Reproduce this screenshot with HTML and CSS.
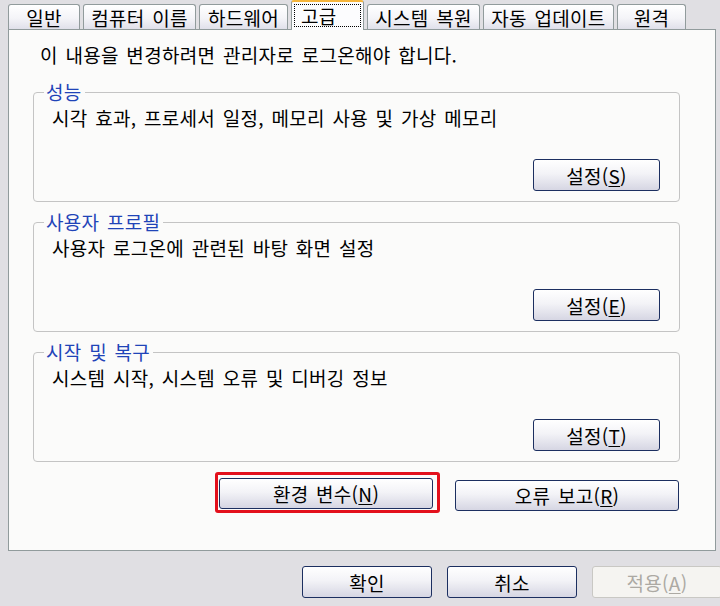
FILE: index.html
```html
<!DOCTYPE html>
<html lang="ko">
<head>
  <meta charset="UTF-8" />
  <title>시스템 등록 정보</title>
  <link rel="stylesheet" href="styles.css">
</head>
<body>

  <div class="tabs">
    <div class="tab tab-general">일반</div>
    <div class="tab tab-computer">컴퓨터 이름</div>
    <div class="tab tab-hardware">하드웨어</div>
    <div class="tab tab-advanced is-active"><span class="focus">고급</span></div>
    <div class="tab tab-restore">시스템 복원</div>
    <div class="tab tab-update">자동 업데이트</div>
    <div class="tab tab-remote">원격</div>
  </div>

  <div class="panel">
    <p class="notice">이 내용을 변경하려면 관리자로 로그온해야 합니다.</p>

    <fieldset class="group">
      <legend>성능</legend>
      <p class="group-desc">시각 효과, 프로세서 일정, 메모리 사용 및 가상 메모리</p>
      <div class="group-actions">
        <button class="btn btn-setting">설정(<u>S</u>)</button>
      </div>
    </fieldset>

    <fieldset class="group">
      <legend>사용자 프로필</legend>
      <p class="group-desc">사용자 로그온에 관련된 바탕 화면 설정</p>
      <div class="group-actions">
        <button class="btn btn-setting">설정(<u>E</u>)</button>
      </div>
    </fieldset>

    <fieldset class="group">
      <legend>시작 및 복구</legend>
      <p class="group-desc">시스템 시작, 시스템 오류 및 디버깅 정보</p>
      <div class="group-actions">
        <button class="btn btn-setting">설정(<u>T</u>)</button>
      </div>
    </fieldset>

    <div class="panel-actions">
      <span class="highlight">
        <button class="btn btn-env">환경 변수(<u>N</u>)</button>
      </span>
      <button class="btn btn-report">오류 보고(<u>R</u>)</button>
    </div>
  </div>

  <div class="dialog-actions">
    <button class="btn btn-dialog">확인</button>
    <button class="btn btn-dialog">취소</button>
    <button class="btn btn-dialog" disabled>적용(<u>A</u>)</button>
  </div>

</body>
</html>
```

FILE: styles.css
```css
* { margin: 0; padding: 0; box-sizing: border-box; }
body {
  width: 720px;
  height: 606px;
  overflow: hidden;
  background: #e0dfe3;
  font-family: "Noto Sans CJK KR", "Noto Sans", sans-serif;
  font-size: 19px;
  letter-spacing: 0.3px;
  word-spacing: 2px;
  color: #000;
}

/* tab strip */
.tabs {
  display: flex;
  align-items: flex-end;
  gap: 3px;
  height: 29px;
  padding-left: 8px;
}
.tab {
  height: 25px;
  border: 1px solid #919b9c;
  border-bottom: none;
  border-radius: 3px 3px 0 0;
  background: linear-gradient(#ffffff, #f4f4f8 55%, #e0e0ea);
  display: flex;
  align-items: center;
  justify-content: center;
  line-height: 1;
}
.tab-general { width: 72px; }
.tab-computer { width: 113px; }
.tab-hardware { width: 89px; }
.tab-advanced { width: 73px; }
.tab-restore { width: 113px; }
.tab-update { width: 131px; }
.tab-remote { width: 69px; }

.tab.is-active {
  height: 30px;
  margin-bottom: -1px;
  position: relative;
  z-index: 1;
  background: #fcfcfe;
  border-top: 2px solid #f5b53c;
  padding: 1px 2px 2px;
}
.focus {
  flex: 1;
  height: 23px;
  border: 1px dotted #000;
  display: flex;
  align-items: center;
  padding-left: 6px;
}

/* tab page */
.panel {
  margin-left: 8px;
  width: 708px;
  height: 522px;
  border: 1px solid #919b9c;
  background: #fbfbfa;
  padding: 15px 35px 0 24px;
}
.notice {
  line-height: 20px;
  padding-left: 7px;
  margin-bottom: 17px;
}

.group {
  border: 1px solid #c4c4c4;
  border-radius: 4px;
  padding: 6px 19px 10px 18px;
  margin-bottom: 10px;
}
.group legend {
  color: #1f44b8;
  line-height: 20px;
  margin-left: -8px;
  padding: 0 3px 0 2px;
}
.group-desc { line-height: 20px; }
.group-actions {
  display: flex;
  justify-content: flex-end;
  margin-top: 31px;
}

.panel-actions {
  display: flex;
  justify-content: flex-end;
  align-items: flex-start;
  gap: 15px;
  margin-top: 1px;
}
.highlight {
  display: flex;
  border: 3px solid #e3101c;
  border-radius: 3px;
  padding: 3px 4px 1px 1px;
}

/* buttons */
.btn {
  font: inherit;
  letter-spacing: inherit;
  word-spacing: inherit;
  color: #000;
  border: 1px solid #1c2f60;
  border-radius: 3px;
  background: linear-gradient(#ffffff, #f3f3f7 45%, #d6d6e3);
  display: flex;
  align-items: center;
  justify-content: center;
  line-height: 1;
  cursor: pointer;
}
.btn u { text-underline-offset: 2px; }
.btn-setting { width: 127px; height: 32px; }
.btn-env { width: 214px; height: 31px; }
.btn-report { width: 224px; height: 31px; margin-top: 8px; margin-right: 1px; }

.dialog-actions {
  display: flex;
  gap: 15px;
  padding-left: 302px;
  margin-top: 15px;
}
.btn-dialog { width: 130px; height: 32px; flex-shrink: 0; }
.btn:disabled {
  color: #aca9a3;
  border-color: #c9c8c4;
  background: #f5f4f1;
  cursor: default;
}
```
